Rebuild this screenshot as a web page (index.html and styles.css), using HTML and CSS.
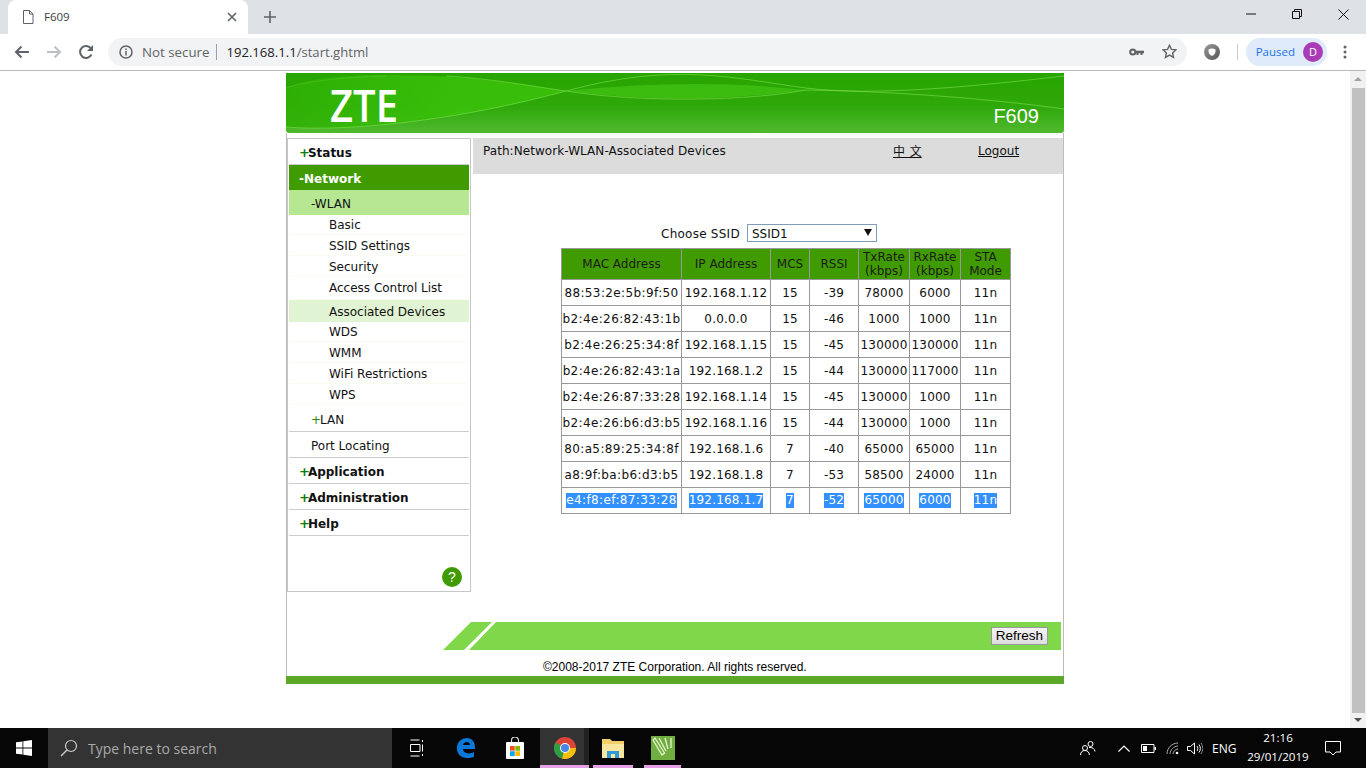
FILE: index.html
```html
<!DOCTYPE html>
<html lang="en">
<head>
<meta charset="utf-8">
<title>F609</title>
<link rel="stylesheet" href="styles.css">
</head>
<body>
<div class="tabstrip">
  <div class="tab">
    <svg class="tab-doc" width="12" height="14" viewBox="0 0 12 14"><path d="M1.500 .5h6l3.500 3.500v9.500h-9.500zM7.500 .5v3.500h3.500" fill="none" stroke="#5f6368"/></svg>
    <span class="tab-title">F609</span>
    <svg class="tab-x" width="10" height="10" viewBox="0 0 10 10"><path d="M1 1l8 8M9 1l-8 8" stroke="#5f6368" stroke-width="1.600"/></svg>
  </div>
  <svg class="newtab" width="12" height="12" viewBox="0 0 12 12"><path d="M6 0v12M0 6h12" stroke="#5f6368" stroke-width="1.600"/></svg>
  <div class="win-btns">
    <svg width="10" height="10" viewBox="0 0 10 10"><path d="M0 5h10" stroke="#111"/></svg>
    <svg width="10" height="10" viewBox="0 0 10 10"><path d="M.5 2.500h7v7h-7zM2.500 2.500v-2h7v7h-2" fill="none" stroke="#111"/></svg>
    <svg width="11" height="11" viewBox="0 0 11 11"><path d="M.5 .5l10 10M10.500 .5l-10 10" stroke="#111"/></svg>
  </div>
</div>
<div class="toolbar">
  <svg class="nav" width="16" height="14" viewBox="0 0 16 14"><path d="M15 7H2M7.500 1.500L2 7l5.500 5.500" fill="none" stroke="#5f6368" stroke-width="2"/></svg>
  <svg class="nav" width="16" height="14" viewBox="0 0 16 14"><path d="M1 7h13M8.500 1.500L14 7l-5.500 5.500" fill="none" stroke="#bdc1c6" stroke-width="2"/></svg>
  <svg class="nav" width="16" height="16" viewBox="0 0 16 16"><path d="M13.500 10.500A6 6 0 1 1 13 4.500" fill="none" stroke="#5f6368" stroke-width="2"/><path d="M15 1v6H9z" fill="#5f6368"/></svg>
  <div class="omnibox">
    <svg width="14" height="14" viewBox="0 0 14 14"><circle cx="7" cy="7" r="6" fill="none" stroke="#5f6368" stroke-width="1.500"/><path d="M7 6v4.500M7 3.500v1.500" stroke="#5f6368" stroke-width="1.500"/></svg>
    <span class="ns">Not secure</span>
    <span class="omni-sep"></span>
    <span class="url"><span class="url-host">192.168.1.1</span>/start.ghtml</span>
    <span class="omni-right">
      <svg width="15" height="8" viewBox="0 0 15 8"><circle cx="3.800" cy="4" r="2.600" fill="none" stroke="#5f6368" stroke-width="2"/><path d="M6 2.800h9v2.400h-1.500v1.800h-2V5.200H9.500v1.800h-2V5.200H6z" fill="#5f6368"/></svg>
      <svg width="15" height="15" viewBox="0 0 15 15"><path d="M7.500 1.300l1.900 4.100 4.500.5-3.300 3 .9 4.500-4-2.300-4 2.300.9-4.500-3.300-3 4.500-.5z" fill="none" stroke="#5f6368" stroke-width="1.400"/></svg>
    </span>
  </div>
  <svg class="ext" width="16" height="16" viewBox="0 0 16 16"><defs><linearGradient id="ring" x1="0" y1="0" x2="1" y2="1"><stop offset="0" stop-color="#9a9a9a"/><stop offset="1" stop-color="#555"/></linearGradient></defs><circle cx="8" cy="8" r="8" fill="url(#ring)"/><path d="M4.500 5.500c2-1.500 5-1.500 7 0 .5 3-1 5.500-3.500 6.500-2.500-1-4-3.500-3.500-6.500z" fill="#fff"/></svg>
  <span class="tool-sep"></span>
  <div class="paused"><span class="paused-label">Paused</span><span class="avatar">D</span></div>
  <svg class="menu-dots" width="4" height="14" viewBox="0 0 4 14"><circle cx="2" cy="2" r="1.500" fill="#5f6368"/><circle cx="2" cy="7" r="1.500" fill="#5f6368"/><circle cx="2" cy="12" r="1.500" fill="#5f6368"/></svg>
</div>
<div class="viewport">
  <div class="page-scroll">
    <div class="frame">
      <header class="banner">
        <svg class="banner-art" width="778" height="60" viewBox="0 0 778 60" preserveAspectRatio="none">
          <defs>
            <linearGradient id="bg" x1="0" y1="0" x2="0" y2="1"><stop offset="0" stop-color="#28a500"/><stop offset=".55" stop-color="#2ea80a"/><stop offset="1" stop-color="#50b92f"/></linearGradient>
            <linearGradient id="lens" x1="0" y1="0" x2="1" y2="0"><stop offset="0" stop-color="#2fb004"/><stop offset=".6" stop-color="#3ac20a"/><stop offset="1" stop-color="#3ac20a"/></linearGradient>
          </defs>
          <rect width="778" height="60" fill="url(#bg)"/>
          <path d="M0 54C60 59 170 48 280 18 220 8 170 2 100 2 60 2 20 5 0 15Z" fill="url(#lens)" opacity=".85"/>
          <path d="M280 18C360 10 440 8 520 17 440 28 360 28 280 18Z" fill="#46c916" opacity=".6"/>
          <path d="M0 54C60 59 170 48 280 18S450 6 520 15 700 12 778 3" fill="none" stroke="#86e356" opacity=".55"/>
          <path d="M160 3C210 6 250 14 280 18 340 28 450 30 520 17M520 17C600 18 700 25 778 36" fill="none" stroke="#86e356" opacity=".55"/>
          <path d="M0 15C20 8 60 4 100 3" fill="none" stroke="#86e356" opacity=".25"/>
        </svg>
        <span class="zte">ZTE</span>
        <span class="model">F609</span>
      </header>
      <div class="frame-body">
        <div class="body-row">
          <nav class="sidebar">
            <div class="m1"><b class="plus">+</b>Status</div>
            <div class="m1 m1-on">-Network</div>
            <div class="m2 m2-on">-WLAN</div>
            <div class="m3 m3-short">Basic</div>
            <div class="m3">SSID Settings</div>
            <div class="m3">Security</div>
            <div class="m3 m3-tall">Access Control List</div>
            <div class="m3 m3-on">Associated Devices</div>
            <div class="m3 m3-short">WDS</div>
            <div class="m3">WMM</div>
            <div class="m3">WiFi Restrictions</div>
            <div class="m3">WPS</div>
            <div class="m2 m2-line m2-lan"><span class="plus-thin">+</span>LAN</div>
            <div class="m2 m2-line">Port Locating</div>
            <div class="m1"><b class="plus">+</b>Application</div>
            <div class="m1"><b class="plus">+</b>Administration</div>
            <div class="m1"><b class="plus">+</b>Help</div>
            <div class="help-wrap"><span class="help">?</span></div>
          </nav>
          <main class="main">
            <div class="pathbar">
              <span class="path">Path:Network-WLAN-Associated Devices</span>
              <a class="lang">中 文</a>
              <a class="logout">Logout</a>
            </div>
            <div class="ssid-row">
              <label class="ssid-label">Choose SSID</label>
              <span class="select">SSID1<span class="caret"></span></span>
            </div>
            <table class="devices">
              <thead>
                <tr><th class="c-mac">MAC Address</th><th class="c-ip">IP Address</th><th class="c-mcs">MCS</th><th class="c-rssi">RSSI</th><th class="c-tx">TxRate (kbps)</th><th class="c-rx">RxRate (kbps)</th><th class="c-sta">STA Mode</th></tr>
              </thead>
              <tbody>
                <tr><td>88:53:2e:5b:9f:50</td><td>192.168.1.12</td><td>15</td><td>-39</td><td>78000</td><td>6000</td><td>11n</td></tr>
                <tr><td>b2:4e:26:82:43:1b</td><td>0.0.0.0</td><td>15</td><td>-46</td><td>1000</td><td>1000</td><td>11n</td></tr>
                <tr><td>b2:4e:26:25:34:8f</td><td>192.168.1.15</td><td>15</td><td>-45</td><td>130000</td><td>130000</td><td>11n</td></tr>
                <tr><td>b2:4e:26:82:43:1a</td><td>192.168.1.2</td><td>15</td><td>-44</td><td>130000</td><td>117000</td><td>11n</td></tr>
                <tr><td>b2:4e:26:87:33:28</td><td>192.168.1.14</td><td>15</td><td>-45</td><td>130000</td><td>1000</td><td>11n</td></tr>
                <tr><td>b2:4e:26:b6:d3:b5</td><td>192.168.1.16</td><td>15</td><td>-44</td><td>130000</td><td>1000</td><td>11n</td></tr>
                <tr><td>80:a5:89:25:34:8f</td><td>192.168.1.6</td><td>7</td><td>-40</td><td>65000</td><td>65000</td><td>11n</td></tr>
                <tr><td>a8:9f:ba:b6:d3:b5</td><td>192.168.1.8</td><td>7</td><td>-53</td><td>58500</td><td>24000</td><td>11n</td></tr>
                <tr class="picked"><td><span>e4:f8:ef:87:33:28</span></td><td><span>192.168.1.7</span></td><td><span>7</span></td><td><span>-52</span></td><td><span>65000</span></td><td><span>6000</span></td><td><span>11n</span></td></tr>
              </tbody>
            </table>
          </main>
        </div>
        <div class="actionbar">
          <div class="action-stripe"></div>
          <div class="action-fill"><span class="refresh">Refresh</span></div>
        </div>
        <div class="copyright">©2008-2017 ZTE Corporation. All rights reserved.</div>
      </div>
      <div class="foot-bar"></div>
    </div>
  </div>
  <div class="scrollbar">
    <span class="arrow-up"></span>
    <span class="thumb"></span>
    <span class="arrow-down"></span>
  </div>
</div>
<footer class="taskbar">
  <div class="start"><svg width="16" height="16" viewBox="0 0 16 16"><path d="M0 2.300l6.500-.9v6.200H0zM7.300 1.300L16 0v7.600H7.300zM0 8.400h6.500v6.200L0 13.700zM7.300 8.400H16V16l-8.700-1.300z" fill="#fff"/></svg></div>
  <div class="search">
    <svg width="18" height="18" viewBox="0 0 18 18"><circle cx="11" cy="7" r="5.500" fill="none" stroke="#ccc" stroke-width="1.200"/><path d="M7 11l-6 6" stroke="#ccc" stroke-width="1.400"/></svg>
    <span>Type here to search</span>
  </div>
  <div class="tb-app tb-49"><svg width="14" height="18" viewBox="0 0 14 18"><path d="M.5 1h9M.5 17h9M.5 5.500h9.500v7H.5zM12.500 1v2M12.500 5.500v7M12.500 15v2" fill="none" stroke="#fff"/></svg></div>
  <div class="tb-app tb-49"><svg width="20" height="22" viewBox="0 0 20 22"><path d="M1 13C0 6 5 1 11 1c5 0 8 4 8 9v2H7c0 4 6 6 11 3v5c-8 3-16 0-17-7zM7 8h7c0-4-6-4-7 0z" fill="#0a78d7"/></svg></div>
  <div class="tb-app tb-50"><svg width="18" height="22" viewBox="0 0 18 22"><path d="M5.500 6V3.500a3.500 3.500 0 0 1 7 0V6" fill="none" stroke="#ddd" stroke-width="1.200"/><rect y="5" width="18" height="17" rx="1" fill="#fff"/><rect x="4" y="9" width="4.700" height="4.700" fill="#f25022"/><rect x="9.300" y="9" width="4.700" height="4.700" fill="#7fba00"/><rect x="4" y="14.300" width="4.700" height="4.700" fill="#00a4ef"/><rect x="9.300" y="14.300" width="4.700" height="4.700" fill="#ffb900"/></svg></div>
  <div class="tb-app tb-chrome"><svg width="22" height="22" viewBox="0 0 22 22"><circle cx="11" cy="11" r="11" fill="#db4437"/><path d="M11 11L1.500 5.500A11 11 0 0 0 8 21.600z" fill="#2c9f45"/><path d="M11 11h11a11 11 0 0 1-14 10.600z" fill="#f4c20d"/><circle cx="11" cy="11" r="5" fill="#fff"/><circle cx="11" cy="11" r="4" fill="#4a86e8"/></svg></div>
  <div class="tb-app tb-files"><svg width="22" height="20" viewBox="0 0 22 20"><path d="M0 1h8l2 2h12v17H0z" fill="#f3cf6a"/><path d="M0 6h22v14H0z" fill="#fbe6a0"/><rect x="5" y="13" width="12" height="7" fill="#2e9bd6"/><rect x="9" y="16" width="4" height="4" fill="#fbe6a0"/></svg></div>
  <div class="tb-app tb-corel"><svg width="24" height="24" viewBox="0 0 24 24"><rect width="24" height="24" fill="#6fae3f"/><path d="M2 4l9 15 2.500-2L4 2zM8 2l7 13M14 2l3 11M20 2v10" fill="none" stroke="#e6f5d0" stroke-width="1.300"/></svg></div>
  <div class="tray">
    <svg class="t-people" width="16" height="16" viewBox="0 0 16 16"><circle cx="5" cy="8" r="2.500" fill="none" stroke="#fff"/><circle cx="10.500" cy="4" r="2.500" fill="none" stroke="#fff"/><path d="M.5 15c0-3 2-4.500 4.500-4.500S9 12 9.500 15M9 7.500c3-.5 5.500 1 6 4" fill="none" stroke="#fff"/></svg>
    <svg class="t-chev" width="12" height="7" viewBox="0 0 12 7"><path d="M.5 6.500l5.500-5.500 5.500 5.500" fill="none" stroke="#fff" stroke-width="1.200"/></svg>
    <svg class="t-batt" width="15" height="9" viewBox="0 0 15 9"><path d="M.5 .5h12.500v8H.5z" fill="none" stroke="#fff"/><rect x="2" y="2" width="4" height="5" fill="#fff"/><rect x="13.500" y="3" width="1.500" height="3" fill="#fff"/></svg>
    <svg class="t-wifi" width="13" height="13" viewBox="0 0 13 13"><path d="M1 12C1 6 6 1 12 1M4 12c0-4 4-8 8-8M7 12c0-2.500 2.500-5 5-5" fill="none" stroke="#aaa"/><circle cx="11" cy="11" r="1.300" fill="#fff"/></svg>
    <svg class="t-vol" width="16" height="13" viewBox="0 0 16 13"><path d="M.5 4.500h3l4-3.500v11l-4-3.500h-3z" fill="none" stroke="#fff"/><path d="M10 4c1 1.500 1 3.500 0 5M12 2.500c1.800 2.500 1.800 5.500 0 8" fill="none" stroke="#fff"/><path d="M14 1c2.300 3.300 2.300 7.700 0 11" fill="none" stroke="#888"/></svg>
    <span class="tray-lang">ENG</span>
    <span class="clock"><span>21:16</span><span>29/01/2019</span></span>
    <svg class="notif" width="16" height="15" viewBox="0 0 16 15"><path d="M.5 .5h15v10.500h-4.500l-3 3-3-3H.5z" fill="none" stroke="#fff"/></svg>
  </div>
</footer>
</body>
</html>
```

FILE: styles.css
```css
* { box-sizing: border-box; }
html, body { margin: 0; padding: 0; height: 100%; overflow: hidden; }
body { width: 1366px; height: 768px; display: flex; flex-direction: column; font-family: "DejaVu Sans", sans-serif; background: #fff; color: #000; }

.tabstrip { height: 34px; flex: none; background: #dee1e6; display: flex; align-items: flex-start; padding-left: 8px; }
.tab { width: 240px; height: 34px; background: #fff; border-radius: 8px 8px 0 0; display: flex; align-items: center; padding: 0 11px 1px 14px; }
.tab-doc { flex: none; }
.tab-title { font: 11.500px "Open Sans", sans-serif; color: #3c4043; margin-left: 10px; flex: 1; }
.tab-x { flex: none; }
.newtab { margin: 11px 0 0 16px; }
.win-btns { margin-left: auto; display: flex; gap: 36px; height: 30px; padding: 9px 17px 0 0; }

.toolbar { height: 37px; flex: none; background: #fff; border-bottom: 1px solid #b8b8b8; display: flex; align-items: center; padding: 0 0 1px 14px; }
.nav { flex: none; margin-right: 16px; }
.omnibox { width: 1079px; height: 28px; margin-left: -2px; background: #f1f3f4; border-radius: 14px; display: flex; align-items: center; padding: 0 10px 0 11px; }
.ns { font: 13.300px "Open Sans", sans-serif; color: #5f6368; margin-left: 9px; }
.omni-sep { width: 1px; height: 16px; background: #9aa0a6; margin: 0 9px 0 7px; }
.url { font: 13.100px "Open Sans", sans-serif; color: #5f6368; }
.url-host { color: #202124; }
.omni-right { margin-left: auto; display: flex; align-items: center; gap: 18px; }
.ext { margin-left: 17px; flex: none; }
.tool-sep { width: 1px; height: 16px; background: #ccc; margin: 0 8px 0 17px; }
.paused { width: 81px; height: 28px; border-radius: 14px; background: #dfebfb; display: flex; align-items: center; justify-content: flex-end; padding-right: 4px; gap: 8px; }
.paused-label { font: 11.500px "Open Sans", sans-serif; color: #1a73e8; }
.avatar { width: 20px; height: 20px; border-radius: 50%; background: #a83cb5; color: #fff; font: 11px/20px "Open Sans", sans-serif; text-align: center; }
.menu-dots { margin-left: 16px; }

.viewport { flex: 1; min-height: 0; display: flex; }
.page-scroll { flex: 1; min-width: 0; display: flex; justify-content: center; padding-top: 2px; }
.frame { width: 778px; }
.banner { height: 60px; position: relative; }
.banner-art { display: block; border-radius: 0 0 3px 3px; }
.zte { position: absolute; left: 44px; top: 10px; font: 600 45px/44px "Open Sans", sans-serif; color: #fff; transform: scaleX(.89); transform-origin: left; }
.model { position: absolute; right: 25px; top: 30px; font: 20px/26px "Liberation Sans", sans-serif; color: #fff; }

.frame-body { border-left: 1px solid #bbb; border-right: 1px solid #bbb; padding-top: 5px; }
.body-row { display: flex; align-items: flex-start; height: 484px; }
.sidebar { width: 184px; height: 454px; flex: none; border: 1px solid #c6c6c6; padding: 0 1px; font-size: 12px; color: #111; position: relative; }
.m1 { height: 26px; line-height: 29px; font-size: 12px; font-weight: bold; padding-left: 10px; border-bottom: 1px solid #ccc; }
.plus { color: #0a7d0a; font-weight: bold; font-size: 13px; letter-spacing: -2px; line-height: 13px; }
.plus-thin { color: #2d8a00; letter-spacing: -1px; }
.m1-on { height: 25px; background: #3f9b00; color: #fff; border-bottom: 0; }
.m2 { height: 25px; line-height: 29px; padding-left: 22px; }
.m2-on { background: #b6e793; }
.m2-line { height: 26px; line-height: 29px; border-bottom: 1px solid #ccc; }
.m2-lan { height: 27px; line-height: 31px; }
.m3 { height: 21px; line-height: 22px; padding-left: 40px; border-bottom: 1px solid #fbfbf0; }
.m3-short { height: 20px; line-height: 21px; }
.m3-tall { height: 23px; }
.m3-on { height: 22px; line-height: 24px; background: #e0f3d2; border-bottom: 0; }
.help-wrap { position: absolute; right: 8px; bottom: 4px; }
.help { display: block; width: 20px; height: 20px; border-radius: 50%; background: #3f9b00; color: #fff; font: 14px/20px "Liberation Sans", sans-serif; text-align: center; }

.main { flex: 1; min-width: 0; margin-left: 2px; font-size: 12px; color: #111; }
.pathbar { height: 36px; background: #dcdcdc; display: flex; align-items: flex-start; padding: 6px 0 0 10px; line-height: 14px; }
.path { width: 410px; letter-spacing: .06px; }
.lang { width: 85px; text-decoration: underline; font-family: "Noto Sans CJK SC", "DejaVu Sans", sans-serif; word-spacing: 2px; }
.logout { text-decoration: underline; }
.ssid-row { display: flex; align-items: center; height: 18px; margin: 50px 0 6px 188px; }
.ssid-label { margin-right: 7px; letter-spacing: .25px; padding-top: 2px; }
.select { width: 130px; height: 18px; border: 1px solid #7f9db9; padding-left: 4px; line-height: 18px; position: relative; display: block; }
.caret { position: absolute; right: 4px; top: 4px; width: 0; height: 0; border-left: 4px solid transparent; border-right: 4px solid transparent; border-top: 7px solid #111; }

.devices { border-collapse: collapse; table-layout: fixed; width: 449px; margin-left: 88px; }
.devices th, .devices td { border: 1px solid #999; padding: 0; text-align: center; font-weight: normal; white-space: nowrap; letter-spacing: .2px; }
.devices td:first-child { letter-spacing: .38px; }
.devices th { background: #3f9b00; height: 31px; line-height: 14px; white-space: normal; color: #1c1c1c; letter-spacing: 0; }
.devices td { height: 26px; }
.c-mac { width: 120px; } .c-ip { width: 89px; } .c-mcs { width: 39px; } .c-rssi { width: 49px; } .c-tx { width: 51px; } .c-rx { width: 51px; } .c-sta { width: 50px; }
.picked span { background: #3390ff; color: #fff; display: inline-block; line-height: 15px; }

.actionbar { height: 28px; margin-left: 156px; margin-right: 2px; display: flex; }
.action-stripe { width: 49px; flex: none; background: #80d74a; clip-path: polygon(0 100%, 28px 0, 100% 0, 21px 100%); }
.action-fill { flex: 1; margin-left: -23px; background: #80d74a; clip-path: polygon(27px 0, 100% 0, 100% 100%, 0 100%); display: flex; align-items: center; justify-content: flex-end; padding-right: 13px; }
.refresh { flex: none; height: 18px; width: 57px; background: linear-gradient(#f4f4f4, #dedede); border: 1px solid #999; text-align: center; font: 13.500px/16px "Liberation Sans", sans-serif; color: #000; }
.copyright { height: 26px; padding: 9px 0 0 256px; font: 12px/17px "Liberation Sans", sans-serif; }
.foot-bar { height: 8px; background: #5ca829; }

.scrollbar { width: 16px; flex: none; background: #f1f1f1; display: flex; flex-direction: column; align-items: center; }
.arrow-up { border-left: 4px solid transparent; border-right: 4px solid transparent; border-bottom: 4px solid #a3a3a3; margin: 6px 0 7px; }
.thumb { width: 13px; flex: 1; background: #c1c1c1; margin-bottom: 5px; }
.arrow-down { border-left: 4px solid transparent; border-right: 4px solid transparent; border-top: 4px solid #505050; margin: 0 0 6px; }

.taskbar { height: 40px; flex: none; background: #060606; display: flex; align-items: center; color: #fff; }
.start { width: 48px; height: 40px; display: flex; align-items: center; justify-content: center; }
.search { width: 344px; height: 40px; background: #333; display: flex; align-items: center; padding-left: 12px; gap: 10px; font: 14px "Open Sans", sans-serif; color: #aaa; }
.tb-app { height: 40px; display: flex; align-items: center; justify-content: center; flex: none; }
.tb-49 { width: 49px; }
.tb-50 { width: 49px; margin-right: 1px; }
.tb-chrome { width: 49px; background: linear-gradient(to right, #333 90%, #222 90%); border-bottom: 3px solid #e6a0e6; padding-top: 3px; margin-right: 4px; }
.tb-files { width: 40px; border-bottom: 3px solid #e6a0e6; padding-top: 3px; margin-right: 11px; }
.tb-corel { width: 37px; border-bottom: 3px solid #e6a0e6; padding-top: 3px; }
.tray { margin-left: auto; display: flex; align-items: center; padding-right: 25px; }
.t-people { margin-right: 22px; }
.t-chev { margin-right: 11px; }
.t-batt { margin-right: 10px; }
.t-wifi { margin-right: 8px; }
.t-vol { margin-right: 9px; }
.tray-lang { font: 12px "Open Sans", sans-serif; width: 24px; margin-right: 7px; }
.clock { width: 70px; display: flex; flex-direction: column; align-items: center; font: 11.600px/19px "Open Sans", sans-serif; margin: 0 12px 2px 0; }
```
